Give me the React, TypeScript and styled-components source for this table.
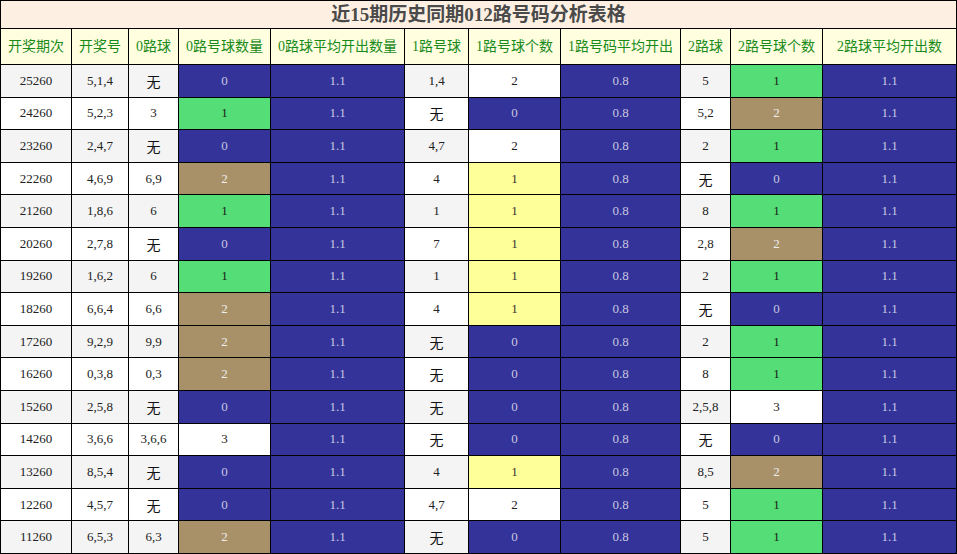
import React from "react";
import styled, { createGlobalStyle } from "styled-components";

const Global = createGlobalStyle`
  html, body { margin: 0; padding: 0; background: #fff; }
  body { font-family: "Liberation Serif", "Noto Sans CJK SC", serif; }
`;

const Table = styled.table`
  width: 956px;
  table-layout: fixed;
  border-collapse: collapse;
  font-family: "Liberation Serif", "Noto Sans CJK SC", serif;
`;

const TitleRow = styled.tr`
  height: 28px;
`;

const HeadRow = styled.tr`
  height: 36px;
`;

const TitleCell = styled.th`
  padding: 0;
  background: #fdf0e2;
  border: 1px solid #000;
  color: #4a4a4a;
  font-size: 19px;
  line-height: 22px;
  font-weight: bold;
  text-align: center;
  vertical-align: middle;
`;

const HeadCell = styled.th`
  padding: 0;
  background: #ffffe0;
  border: 1px solid #000;
  color: #1a8a1a;
  font-size: 14px;
  line-height: 18px;
  font-weight: normal;
  text-align: center;
  white-space: nowrap;
`;

type Tone = "plain" | "blue" | "green" | "tan" | "yellow" | "white";

const bg: Record<Tone, string> = {
  plain: "transparent",
  blue: "#333399",
  green: "#55dd77",
  tan: "#a89068",
  yellow: "#ffff99",
  white: "#ffffff",
};
const fg: Record<Tone, string> = {
  plain: "#222",
  blue: "#c8c8e0",
  green: "#1a1a1a",
  tan: "#eeeeee",
  yellow: "#333",
  white: "#222",
};

const Row = styled.tr<{ $alt: boolean }>`
  height: 32.6px;
  background: ${(p) => (p.$alt ? "#f4f4f4" : "#ffffff")};
`;

const Cell = styled.td<{ $tone: Tone; $cjk?: boolean }>`
  padding: ${(p) => (p.$cjk ? "4px 0 0" : "0")};
  border: 1px solid #000;
  text-align: center;
  vertical-align: middle;
  font-size: ${(p) => (p.$cjk ? "14px" : "13px")};
  line-height: 14px;
  background: ${(p) => bg[p.$tone]};
  color: ${(p) => (p.$cjk ? "#111" : fg[p.$tone])};
  white-space: nowrap;
`;

const widths = [71, 57, 50, 92, 134, 64, 92, 120, 50, 92, 134];
const headers = [
  "开奖期次",
  "开奖号",
  "0路球",
  "0路号球数量",
  "0路球平均开出数量",
  "1路号球",
  "1路号球个数",
  "1路号码平均开出",
  "2路球",
  "2路号球个数",
  "2路球平均开出数",
];

type R = [string, string, string, number, string, number, string, number];
const data: R[] = [
  ["25260", "5,1,4", "无", 0, "1,4", 2, "5", 1],
  ["24260", "5,2,3", "3", 1, "无", 0, "5,2", 2],
  ["23260", "2,4,7", "无", 0, "4,7", 2, "2", 1],
  ["22260", "4,6,9", "6,9", 2, "4", 1, "无", 0],
  ["21260", "1,8,6", "6", 1, "1", 1, "8", 1],
  ["20260", "2,7,8", "无", 0, "7", 1, "2,8", 2],
  ["19260", "1,6,2", "6", 1, "1", 1, "2", 1],
  ["18260", "6,6,4", "6,6", 2, "4", 1, "无", 0],
  ["17260", "9,2,9", "9,9", 2, "无", 0, "2", 1],
  ["16260", "0,3,8", "0,3", 2, "无", 0, "8", 1],
  ["15260", "2,5,8", "无", 0, "无", 0, "2,5,8", 3],
  ["14260", "3,6,6", "3,6,6", 3, "无", 0, "无", 0],
  ["13260", "8,5,4", "无", 0, "4", 1, "8,5", 2],
  ["12260", "4,5,7", "无", 0, "4,7", 2, "5", 1],
  ["11260", "6,5,3", "6,3", 2, "无", 0, "5", 1],
];

const toneA = (n: number): Tone =>
  n === 0 ? "blue" : n === 1 ? "green" : n === 2 ? "tan" : "white";
const toneB = (n: number): Tone =>
  n === 0 ? "blue" : n === 1 ? "yellow" : "white";

const Plain = ({ v }: { v: string }) => (
  <Cell $tone="plain" $cjk={v === "无"}>
    {v}
  </Cell>
);

export default function App() {
  return (
    <>
      <Global />
      <Table>
        <colgroup>
          {widths.map((w, i) => (
            <col key={i} style={{ width: w }} />
          ))}
        </colgroup>
        <thead>
          <TitleRow>
            <TitleCell colSpan={11}>近15期历史同期012路号码分析表格</TitleCell>
          </TitleRow>
          <HeadRow>
            {headers.map((h) => (
              <HeadCell key={h}>{h}</HeadCell>
            ))}
          </HeadRow>
        </thead>
        <tbody>
          {data.map((r, i) => (
            <Row key={r[0]} $alt={i % 2 === 0}>
              <Plain v={r[0]} />
              <Plain v={r[1]} />
              <Plain v={r[2]} />
              <Cell $tone={toneA(r[3])}>{r[3]}</Cell>
              <Cell $tone="blue">1.1</Cell>
              <Plain v={r[4]} />
              <Cell $tone={toneB(r[5])}>{r[5]}</Cell>
              <Cell $tone="blue">0.8</Cell>
              <Plain v={r[6]} />
              <Cell $tone={toneA(r[7])}>{r[7]}</Cell>
              <Cell $tone="blue">1.1</Cell>
            </Row>
          ))}
        </tbody>
      </Table>
    </>
  );
}
